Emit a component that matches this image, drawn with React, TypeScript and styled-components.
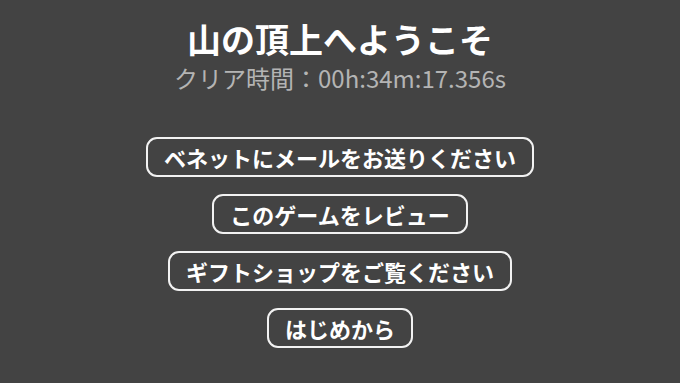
import styled, { createGlobalStyle } from 'styled-components';

const GlobalStyle = createGlobalStyle`
  html, body {
    margin: 0;
    padding: 0;
    background: #434343;
  }
  body {
    font-family: "Noto Sans CJK JP", "Noto Sans", sans-serif;
  }
`;

const Screen = styled.main`
  width: 680px;
  height: 383px;
  display: flex;
  flex-direction: column;
  align-items: center;
  background: #434343;
  color: #ffffff;
  overflow: hidden;
`;

const Header = styled.header`
  display: flex;
  flex-direction: column;
  align-items: center;
  padding-top: 16px;
`;

const Title = styled.h1`
  margin: 0;
  font-size: 34px;
  font-weight: 700;
  line-height: 46px;
`;

const ClearTime = styled.p`
  margin: 0;
  font-size: 24px;
  line-height: 32px;
  color: #b4b4b4;
`;

const Menu = styled.nav`
  display: flex;
  flex-direction: column;
  align-items: center;
  gap: 17px;
  margin-top: 43px;
`;

const MenuButton = styled.button`
  font-family: inherit;
  font-size: 22px;
  font-weight: 700;
  color: #ffffff;
  background: transparent;
  border: 2px solid #f2f2f2;
  border-radius: 11px;
  height: 40px;
  padding: 0 16px;
  line-height: 1;
  cursor: pointer;
`;

const items = [
  'ベネットにメールをお送りください',
  'このゲームをレビュー',
  'ギフトショップをご覧ください',
  'はじめから',
];

export default function App() {
  return (
    <>
      <GlobalStyle />
      <Screen>
        <Header>
          <Title>山の頂上へようこそ</Title>
          <ClearTime>クリア時間：00h:34m:17.356s</ClearTime>
        </Header>
        <Menu>
          {items.map((label) => (
            <MenuButton key={label}>{label}</MenuButton>
          ))}
        </Menu>
      </Screen>
    </>
  );
}
